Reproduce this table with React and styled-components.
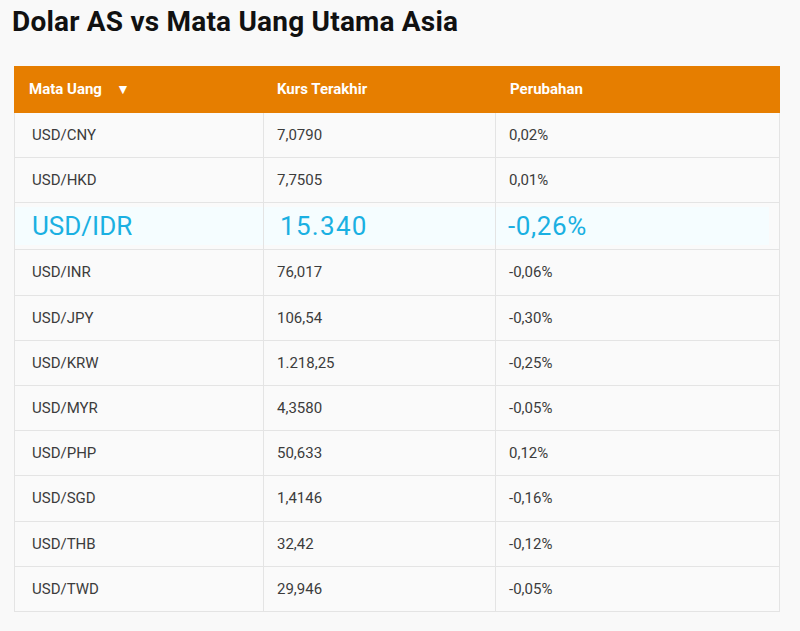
import React from 'react';
import styled, { createGlobalStyle } from 'styled-components';

const GlobalStyle = createGlobalStyle`
  html, body {
    margin: 0;
    padding: 0;
    background: #f9f9f9;
    font-family: Roboto, "Liberation Sans", Arial, sans-serif;
  }
`;

const Page = styled.div`
  width: 800px;
  height: 631px;
  box-sizing: border-box;
  padding: 5px 21px 0 14px;
  background: #f9f9f9;
  overflow: hidden;
`;

const Title = styled.h1`
  margin: 0 0 27px -2px;
  font-size: 28px;
  line-height: 34px;
  font-weight: 700;
  color: #111;
  letter-spacing: 0.2px;
`;

const Table = styled.table`
  width: 765px;
  border-collapse: collapse;
  table-layout: fixed;
`;

const HeadCell = styled.th`
  box-sizing: border-box;
  height: 46px;
  padding: 0 0 2px ${p => p.$pad}px;
  background: #e67e00;
  border: 1px solid #e67e00;
  color: #fff;
  font-size: 15px;
  font-weight: 700;
  text-align: left;
  letter-spacing: 0;
  vertical-align: middle;
`;

const Arrow = styled.span`
  margin-left: 14px;
  font-size: 14px;
`;

const Row = styled.tr`
  height: 45.2px;
`;

const Cell = styled.td`
  padding: 0 0 0 ${p => p.$pad}px;
  background: #fafafa;
  border: 1px solid #e4e4e4;
  color: #3c3c3c;
  font-size: 15px;
  letter-spacing: 0;
  vertical-align: middle;
`;

const HighlightCell = styled(Cell)`
  padding: 4px 0 4px 0;
`;

const Highlight = styled.div`
  height: 38px;
  display: flex;
  align-items: center;
  padding-left: ${p => p.$pad}px;
  margin-right: ${p => p.$right || 0}px;
  background: #f5fdff;
  color: #1ab0e2;
  font-size: 26px;
  letter-spacing: ${p => p.$spacing || 0}px;
`;

const rows = [
  ['USD/CNY', '7,0790', '0,02%'],
  ['USD/HKD', '7,7505', '0,01%'],
  ['USD/IDR', '15.340', '-0,26%', true],
  ['USD/INR', '76,017', '-0,06%'],
  ['USD/JPY', '106,54', '-0,30%'],
  ['USD/KRW', '1.218,25', '-0,25%'],
  ['USD/MYR', '4,3580', '-0,05%'],
  ['USD/PHP', '50,633', '0,12%'],
  ['USD/SGD', '1,4146', '-0,16%'],
  ['USD/THB', '32,42', '-0,12%'],
  ['USD/TWD', '29,946', '-0,05%'],
];

export default function App() {
  return (
    <Page>
      <GlobalStyle />
      <Title>Dolar AS vs Mata Uang Utama Asia</Title>
      <Table>
        <colgroup>
          <col style={{ width: 249 }} />
          <col style={{ width: 232 }} />
          <col style={{ width: 284 }} />
        </colgroup>
        <thead>
          <tr>
            <HeadCell $pad={14}>Mata Uang<Arrow>▼</Arrow></HeadCell>
            <HeadCell $pad={13}>Kurs Terakhir</HeadCell>
            <HeadCell $pad={14}>Perubahan</HeadCell>
          </tr>
        </thead>
        <tbody>
          {rows.map(([pair, rate, change, hl]) =>
            hl ? (
              <Row key={pair}>
                <HighlightCell><Highlight $pad={17}>{pair}</Highlight></HighlightCell>
                <HighlightCell><Highlight $pad={16} $spacing={1.3}>{rate}</Highlight></HighlightCell>
                <HighlightCell><Highlight $pad={12} $right={10} $spacing={0.6}>{change}</Highlight></HighlightCell>
              </Row>
            ) : (
              <Row key={pair}>
                <Cell $pad={17}>{pair}</Cell>
                <Cell $pad={13}>{rate}</Cell>
                <Cell $pad={13}>{change}</Cell>
              </Row>
            )
          )}
        </tbody>
      </Table>
    </Page>
  );
}
